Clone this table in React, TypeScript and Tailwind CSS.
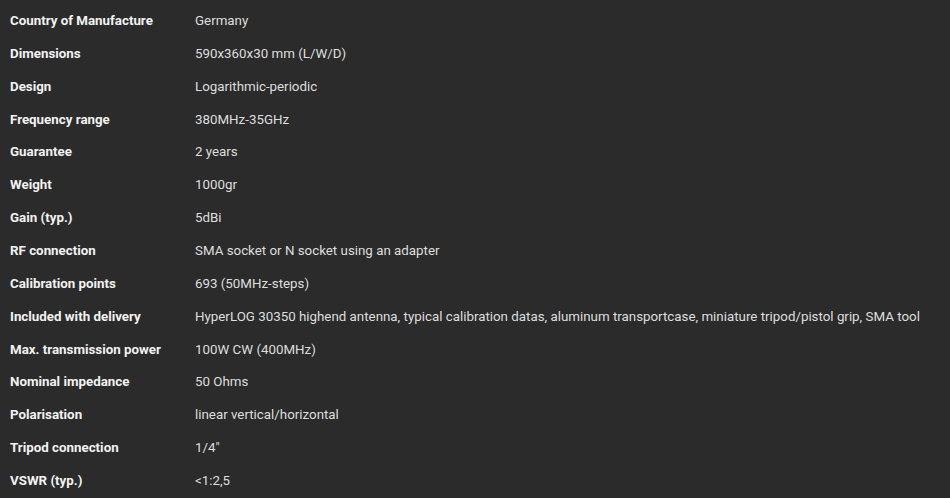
import React from "react";

const rows: [string, string][] = [
  ["Country of Manufacture", "Germany"],
  ["Dimensions", "590x360x30 mm (L/W/D)"],
  ["Design", "Logarithmic-periodic"],
  ["Frequency range", "380MHz-35GHz"],
  ["Guarantee", "2 years"],
  ["Weight", "1000gr"],
  ["Gain (typ.)", "5dBi"],
  ["RF connection", "SMA socket or N socket using an adapter"],
  ["Calibration points", "693 (50MHz-steps)"],
  ["Included with delivery", "HyperLOG 30350 highend antenna, typical calibration datas, aluminum transportcase, miniature tripod/pistol grip, SMA tool"],
  ["Max. transmission power", "100W CW (400MHz)"],
  ["Nominal impedance", "50 Ohms"],
  ["Polarisation", "linear vertical/horizontal"],
  ["Tripod connection", "1/4\""],
  ["VSWR (typ.)", "<1:2,5"],
];

export default function App() {
  return (
    <div className="w-[950px] h-[498px] bg-[#2b2b2b] overflow-hidden pt-[4.5px]" style={{ fontFamily: "Roboto, 'Liberation Sans', sans-serif" }}>
      {rows.map(([k, v]) => (
        <div key={k} className="grid grid-cols-[195px_1fr] h-[32.86px] items-center text-[13.33px]">
          <div className="pl-[10px] font-bold text-[#f2f2f2]">{k}</div>
          <div className="text-[#dedede] whitespace-nowrap">{v}</div>
        </div>
      ))}
    </div>
  );
}
